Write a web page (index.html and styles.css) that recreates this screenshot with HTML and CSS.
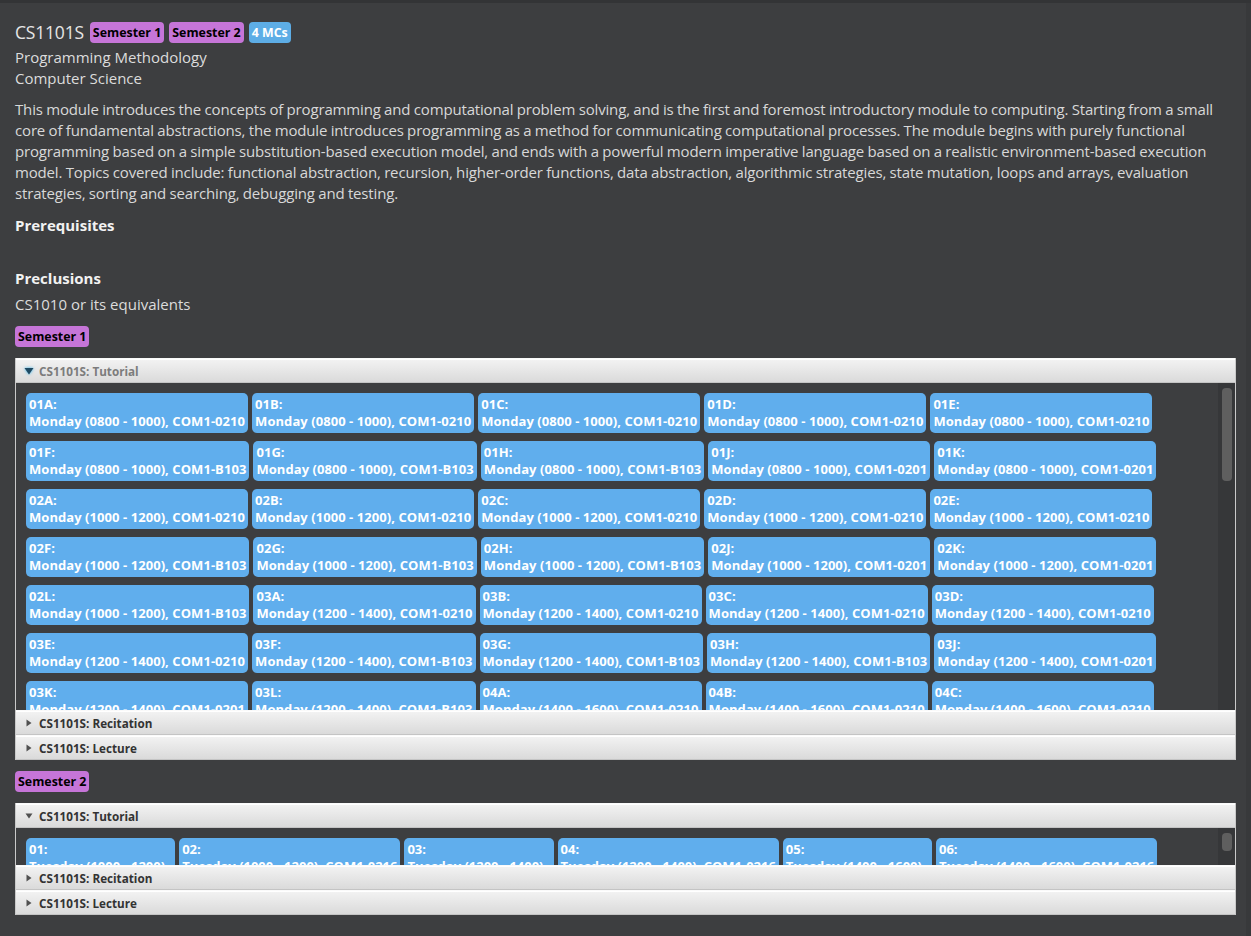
FILE: index.html
```html
<!DOCTYPE html>
<html lang="en">
<head>
<meta charset="utf-8">
<title>CS1101S</title>
<link rel="stylesheet" href="styles.css">
</head>
<body>
<div class="topbar"></div>
<div class="window">
  <main class="page">
    <div class="title-row">
      <span class="code">CS1101S</span>
      <span class="badge sem">Semester 1</span>
      <span class="badge sem">Semester 2</span>
      <span class="badge mc">4 MCs</span>
    </div>
    <div class="subtitle first">Programming Methodology</div>
    <div class="subtitle">Computer Science</div>
    <p class="desc">This module introduces the concepts of programming and computational problem solving, and is the first and foremost introductory module to computing. Starting from a small core of fundamental abstractions, the module introduces programming as a method for communicating computational processes. The module begins with purely functional programming based on a simple substitution-based execution model, and ends with a powerful modern imperative language based on a realistic environment-based execution model. Topics covered include: functional abstraction, recursion, higher-order functions, data abstraction, algorithmic strategies, state mutation, loops and arrays, evaluation strategies, sorting and searching, debugging and testing.</p>
    <div class="heading first-heading">Prerequisites</div>
    <div class="value empty"></div>
    <div class="heading">Preclusions</div>
    <div class="value">CS1010 or its equivalents</div>

    <div class="sem-row first-sem"><span class="badge sem">Semester 1</span></div>
    <section class="accordion">
      <div class="pane-header focused">
        <svg class="arrow-down" width="12" height="12" viewBox="0 0 12 12"><polygon points="1.5,3 10.5,3 6,9.5" /></svg>
        <span class="pane-title">CS1101S: Tutorial</span>
      </div>
      <div class="pane-content tall">
        <div class="flow">
          <div class="chip"><div>01A:</div><div>Monday (0800 - 1000), COM1-0210</div></div>
          <div class="chip"><div>01B:</div><div>Monday (0800 - 1000), COM1-0210</div></div>
          <div class="chip"><div>01C:</div><div>Monday (0800 - 1000), COM1-0210</div></div>
          <div class="chip"><div>01D:</div><div>Monday (0800 - 1000), COM1-0210</div></div>
          <div class="chip"><div>01E:</div><div>Monday (0800 - 1000), COM1-0210</div></div>
          <div class="chip"><div>01F:</div><div>Monday (0800 - 1000), COM1-B103</div></div>
          <div class="chip"><div>01G:</div><div>Monday (0800 - 1000), COM1-B103</div></div>
          <div class="chip"><div>01H:</div><div>Monday (0800 - 1000), COM1-B103</div></div>
          <div class="chip"><div>01J:</div><div>Monday (0800 - 1000), COM1-0201</div></div>
          <div class="chip"><div>01K:</div><div>Monday (0800 - 1000), COM1-0201</div></div>
          <div class="chip"><div>02A:</div><div>Monday (1000 - 1200), COM1-0210</div></div>
          <div class="chip"><div>02B:</div><div>Monday (1000 - 1200), COM1-0210</div></div>
          <div class="chip"><div>02C:</div><div>Monday (1000 - 1200), COM1-0210</div></div>
          <div class="chip"><div>02D:</div><div>Monday (1000 - 1200), COM1-0210</div></div>
          <div class="chip"><div>02E:</div><div>Monday (1000 - 1200), COM1-0210</div></div>
          <div class="chip"><div>02F:</div><div>Monday (1000 - 1200), COM1-B103</div></div>
          <div class="chip"><div>02G:</div><div>Monday (1000 - 1200), COM1-B103</div></div>
          <div class="chip"><div>02H:</div><div>Monday (1000 - 1200), COM1-B103</div></div>
          <div class="chip"><div>02J:</div><div>Monday (1000 - 1200), COM1-0201</div></div>
          <div class="chip"><div>02K:</div><div>Monday (1000 - 1200), COM1-0201</div></div>
          <div class="chip"><div>02L:</div><div>Monday (1000 - 1200), COM1-B103</div></div>
          <div class="chip"><div>03A:</div><div>Monday (1200 - 1400), COM1-0210</div></div>
          <div class="chip"><div>03B:</div><div>Monday (1200 - 1400), COM1-0210</div></div>
          <div class="chip"><div>03C:</div><div>Monday (1200 - 1400), COM1-0210</div></div>
          <div class="chip"><div>03D:</div><div>Monday (1200 - 1400), COM1-0210</div></div>
          <div class="chip"><div>03E:</div><div>Monday (1200 - 1400), COM1-0210</div></div>
          <div class="chip"><div>03F:</div><div>Monday (1200 - 1400), COM1-B103</div></div>
          <div class="chip"><div>03G:</div><div>Monday (1200 - 1400), COM1-B103</div></div>
          <div class="chip"><div>03H:</div><div>Monday (1200 - 1400), COM1-B103</div></div>
          <div class="chip"><div>03J:</div><div>Monday (1200 - 1400), COM1-0201</div></div>
          <div class="chip"><div>03K:</div><div>Monday (1200 - 1400), COM1-0201</div></div>
          <div class="chip"><div>03L:</div><div>Monday (1200 - 1400), COM1-B103</div></div>
          <div class="chip"><div>04A:</div><div>Monday (1400 - 1600), COM1-0210</div></div>
          <div class="chip"><div>04B:</div><div>Monday (1400 - 1600), COM1-0210</div></div>
          <div class="chip"><div>04C:</div><div>Monday (1400 - 1600), COM1-0210</div></div>
          <div class="chip"><div>04D:</div><div>Monday (1400 - 1600), COM1-0210</div></div>
          <div class="chip"><div>04E:</div><div>Monday (1400 - 1600), COM1-0210</div></div>
        </div>
        <div class="scroll-track"><div class="scroll-thumb big"></div></div>
      </div>
      <div class="pane-header">
        <svg class="arrow-right" width="12" height="12" viewBox="0 0 12 12"><polygon points="3.5,2.5 8.5,6 3.5,9.5" /></svg>
        <span class="pane-title">CS1101S: Recitation</span>
      </div>
      <div class="pane-header">
        <svg class="arrow-right" width="12" height="12" viewBox="0 0 12 12"><polygon points="3.5,2.5 8.5,6 3.5,9.5" /></svg>
        <span class="pane-title">CS1101S: Lecture</span>
      </div>
    </section>

    <div class="sem-row"><span class="badge sem">Semester 2</span></div>
    <section class="accordion">
      <div class="pane-header">
        <svg class="arrow-down plain" width="12" height="12" viewBox="0 0 12 12"><polygon points="2.5,3.5 9.5,3.5 6,8.5" /></svg>
        <span class="pane-title">CS1101S: Tutorial</span>
      </div>
      <div class="pane-content short">
        <div class="flow">
          <div class="chip tue"><div>01:</div><div>Tuesday (1000 - 1200), </div></div>
          <div class="chip tue"><div>02:</div><div>Tuesday (1000 - 1200), COM1-0216</div></div>
          <div class="chip tue"><div>03:</div><div>Tuesday (1200 - 1400), </div></div>
          <div class="chip tue"><div>04:</div><div>Tuesday (1200 - 1400), COM1-0216</div></div>
          <div class="chip tue"><div>05:</div><div>Tuesday (1400 - 1600), </div></div>
          <div class="chip tue"><div>06:</div><div>Tuesday (1400 - 1600), COM1-0216</div></div>
        </div>
        <div class="scroll-track"><div class="scroll-thumb small"></div></div>
      </div>
      <div class="pane-header">
        <svg class="arrow-right" width="12" height="12" viewBox="0 0 12 12"><polygon points="3.5,2.5 8.5,6 3.5,9.5" /></svg>
        <span class="pane-title">CS1101S: Recitation</span>
      </div>
      <div class="pane-header">
        <svg class="arrow-right" width="12" height="12" viewBox="0 0 12 12"><polygon points="3.5,2.5 8.5,6 3.5,9.5" /></svg>
        <span class="pane-title">CS1101S: Lecture</span>
      </div>
    </section>
  </main>
  <div class="edge"></div>
</div>
</body>
</html>
```
FILE: styles.css
```css
* { box-sizing: border-box; }

html, body {
  margin: 0;
  padding: 0;
  background: #3d3e40;
  height: 100%;
  overflow: hidden;
}

body {
  font-family: "Open Sans", "Noto Sans", sans-serif;
  color: #dcdcdc;
}

.topbar {
  height: 3px;
  background: #333436;
}

.window {
  display: flex;
  height: calc(100% - 3px);
}

.page {
  flex: 1;
  padding: 0 10px 0 15px;
  min-width: 0;
}

.edge {
  width: 5px;
  background: #38393b;
}

.title-row {
  display: flex;
  align-items: center;
  gap: 5px;
  margin-top: 19px;
  height: 21px;
}

.code {
  font-size: 17.5px;
  color: #e6e6e6;
  margin-right: 1px;
  line-height: 21px;
  letter-spacing: -0.2px;
}

.badge {
  display: inline-block;
  height: 21px;
  line-height: 21px;
  padding: 0 3px;
  border-radius: 4px;
  font-weight: 700;
  font-size: 12.4px;
}

.badge.sem {
  background: #c675d8;
  color: #000;
}

.badge.mc {
  background: #5dade6;
  color: #fff;
}

.subtitle {
  font-size: 15px;
  line-height: 21px;
  color: #dcdcdc;
}

.subtitle.first { margin-top: 4px; }

.desc {
  margin: 10px 0 0 0;
  font-size: 15px;
  line-height: 21px;
  color: #d8d8d8;
  letter-spacing: -0.16px;
  word-spacing: -0.3px;
}

.heading {
  font-size: 15px;
  font-weight: 700;
  line-height: 21px;
  color: #f2f2f2;
  margin-top: 10px;
}

.heading.first-heading { margin-top: 11px; }

.value {
  font-size: 15px;
  line-height: 21px;
  margin-top: 5px;
  color: #dcdcdc;
}

.value.empty { height: 17px; }

.sem-row {
  margin-top: 11px;
  height: 21px;
  display: flex;
}

.accordion {
  margin-top: 11px;
  border-left: 1px solid #c9c9c9;
  border-right: 1px solid #c9c9c9;
}

.pane-header {
  height: 25px;
  display: flex;
  align-items: center;
  padding-left: 7px;
  gap: 4px;
  background: linear-gradient(#f3f3f3, #dadada);
  border-top: 1px solid #fafafa;
  border-bottom: 1px solid #c4c4c4;
  box-shadow: inset 0 1px 0 #ffffff;
}

.pane-header .pane-title {
  font-size: 11.7px;
  font-weight: 700;
  color: #333333;
  line-height: 16px;
}

.pane-header.focused .pane-title { color: #7c7c7c; }

.arrow-right polygon { fill: #505050; }

.arrow-down polygon { fill: #1e4a63; }

.pane-header.focused .arrow-down {
  filter: drop-shadow(0 0 1.5px #38b4ec);
}

.arrow-down.plain polygon { fill: #505050; }

.pane-content {
  display: flex;
  background: #3d3e40;
  overflow: hidden;
}

.pane-content.tall { height: 327px; }
.pane-content.short { height: 37px; }

.flow {
  flex: 1;
  display: flex;
  flex-wrap: wrap;
  align-content: flex-start;
  gap: 8px 4px;
  padding: 10px 0 0 10px;
  min-width: 0;
  overflow: hidden;
}

.chip {
  background: #60aeed;
  color: #ffffff;
  font-size: 13px;
  font-weight: 700;
  line-height: 17px;
  letter-spacing: 0.06px;
  padding: 3px 3px;
  border-radius: 5px;
  white-space: pre;
  height: 40px;
}

.chip.tue { letter-spacing: -0.01px; }

.scroll-track {
  width: 17px;
  flex: none;
  background: #363739;
  padding: 5px 3px 0 4px;
}

.scroll-thumb {
  width: 10px;
  background: #5f5f5f;
  border-radius: 4px;
}

.scroll-thumb.big { height: 93px; }
.scroll-thumb.small { height: 18px; }
```
